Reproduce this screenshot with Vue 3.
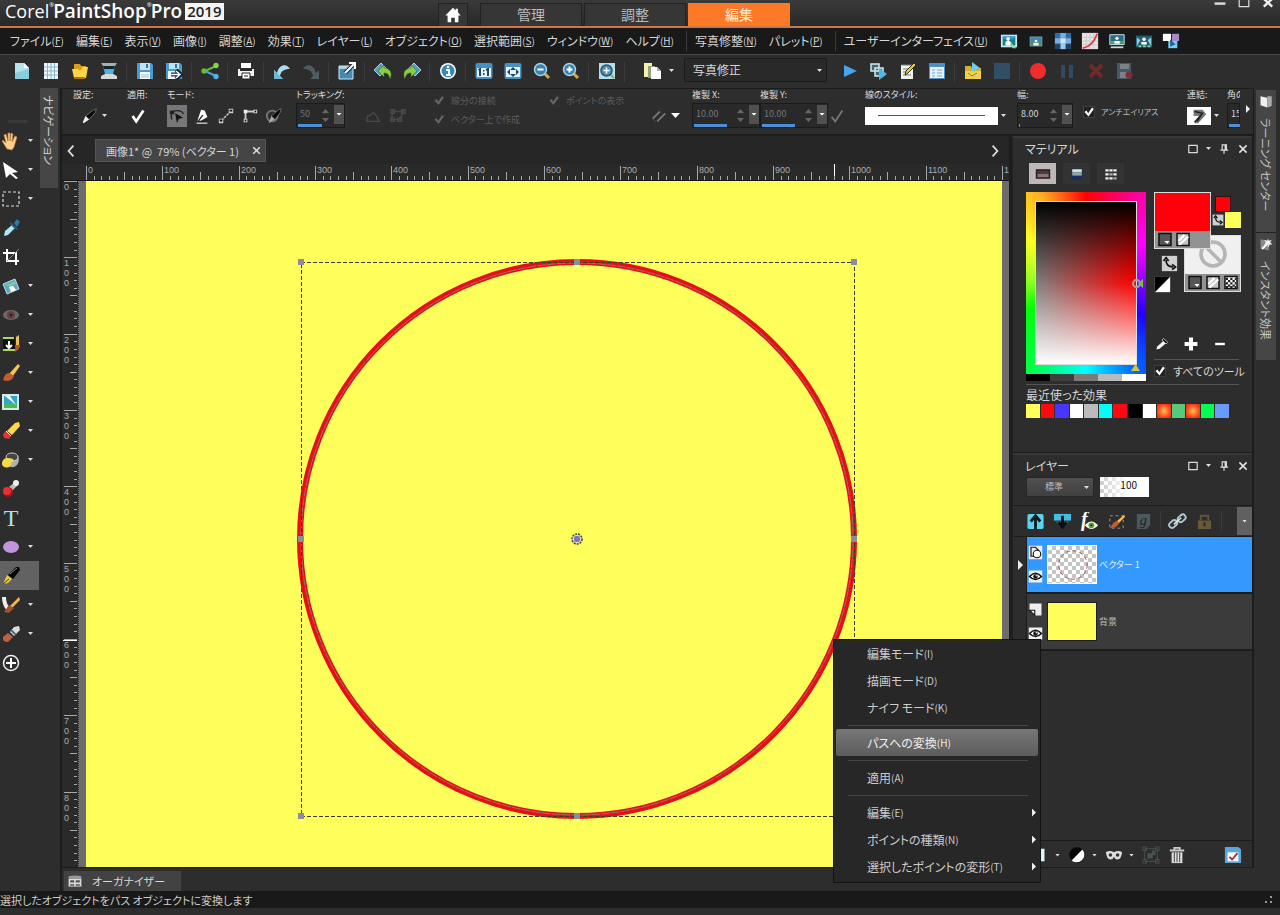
<script setup>
import { ref } from 'vue'

const icons = {
  home: '<path d="M10 2 1.500 10.500H4V18h4v-5h4v5h4v-7.500h2.500L15.500 7V3H13v2z" fill="#fff"/>',
  fresh: '<path d="M3 2h9l5 5v11H3z" fill="#b4e4ee"/><path d="M3 12 17 8v10H3z" fill="#8accdc"/><path d="M12 2v5h5z" fill="#fff"/>',
  grid: '<path d="M3 2h14v16H3z" fill="#eef7fc"/><path d="M6.500 2v16M10 2v16M13.500 2v16M3 6h14M3 10h14M3 14h14" stroke="#8ab4cf"/>',
  open: '<path d="M4 3h6l1 2h5v5H4z" fill="#d99f1d"/><path d="M2 8h6l2 2 3-4h5l-2 11H4z" fill="#ffd548"/><path d="M4 17h11" stroke="#a87512" stroke-width="2"/>',
  scan: '<path d="M2 2h16l-2 3H4z" fill="#aaaead"/><path d="M4 5h12l-2 8H6z" fill="#4ab2e1"/><path d="M4 5h12l-1 3H5z" fill="#14262f"/><path d="M6 13h8l4 2v3H2v-3z" fill="#d5dadb"/>',
  save: '<path d="M2 2h14l2 2v14H2z" fill="#4a9bd0"/><path d="M5 2h10v7H5z" fill="#bfe2f2"/><path d="M11 3h2v4h-2z" fill="#3478a6"/><path d="M5 11h10v7H5z" fill="#f7fbff"/><path d="M6 14h8M6 16h8" stroke="#9cbdcd"/>',
  saveas: '<path d="M2 2h14l2 2v14H2z" fill="#4a9bd0"/><path d="M5 2h10v6H5z" fill="#bfe2f2"/><path d="M11 3h2v4h-2z" fill="#3478a6"/><path d="M4 10h11v8H4z" fill="#f7fbff"/><path d="M7 13.500h8M12 9l5 4.500-5 4.500" fill="none" stroke="#142b3c" stroke-width="4"/><path d="M7 13.500h9M12 10l4 3.500-4 3.500" fill="none" stroke="#fff" stroke-width="1.500"/>',
  share: '<path d="m16 5-11 5" fill="none" stroke="#65ba36" stroke-width="2"/><path d="m5 10 11 5" stroke="#4aa3dd" stroke-width="2"/><circle cx="16" cy="4.500" r="2.700" fill="#86d34c"/><circle cx="4" cy="10" r="2.700" fill="#65ba36"/><circle cx="16" cy="15.500" r="2.700" fill="#53aee6"/>',
  print: '<path d="M5 2h10v5H5z" fill="#fff"/><path d="M2 8h16v7H2z" fill="#f2f2f2"/><path d="M4 8h12v2H4z" fill="#26282a"/><path d="M6 12h8v6H6z" fill="#fff" stroke="#222"/><path d="M8 15h4" stroke="#222"/>',
  undo: '<path d="M2 9v9h9l-3-3c1-5 4-7 10-7-3-6-11-5-13 4z" fill="#a9dcec"/><path d="M2 9v9h9l-3-3-3-3z" fill="#70bad1"/>',
  redo: '<path d="M18 9v9H9l3-3c-1-5-4-7-10-7 3-6 11-5 13 4z" fill="#4d5d63"/>',
  resize: '<path d="M2 5h14v13H2z" fill="#438ab5"/><path d="M2 5h14v3H2z" fill="#a9cfe2"/><path d="M2 5h14v13H2z" fill="none" stroke="#d2e8f4"/><path d="m8 12 8-8" stroke="#1d2d38" stroke-width="4"/><path d="m8 12 9-9m-5-1h6v6" fill="none" stroke="#fff" stroke-width="2"/>',
  rotl: '<path d="m1 9 7-7 6 6-7 7z" fill="#559bc0" stroke="#a5d8ed"/><path d="m5 10 6-6v3c6 0 9 5 6 11-1-4-2-6-6-6v4z" fill="#8ccc42" stroke="#355f16" stroke-width=".5"/>',
  rotr: '<path d="m19 9-7-7-6 6 7 7z" fill="#559bc0" stroke="#a5d8ed"/><path d="M15 10 9 4v3c-6 0-9 5-6 11 1-4 2-6 6-6v4z" fill="#8ccc42" stroke="#355f16" stroke-width=".5"/>',
  info: '<circle cx="10" cy="10" r="8" fill="#fff"/><circle cx="10" cy="10" r="6.500" fill="#3687ba"/><circle cx="10" cy="6" r="1.300" fill="#fff"/><path d="M8 9h3v5m-3 0h5" fill="none" stroke="#fff" stroke-width="2"/>',
  one: '<rect x="1.500" y="2" width="17" height="16" rx="2" fill="#4790c5"/><path d="M3 7h14v9H3z" fill="#e5f3fc"/><path d="M4.500 9 6 8v7m6-6 2-1v7" fill="none" stroke="#1d466b" stroke-width="2"/><path d="M9 9h1.500v1.500H9zm0 3h1.500v2H9z" fill="#1d466b"/>',
  fit: '<rect x="1.500" y="2" width="17" height="16" rx="2" fill="#4790c5"/><path d="M3 6h14v10H3z" fill="#e5f3fc"/><path d="m4 11 3-3v6zm12 0-3-3v6zM10 6l3 3H7zm0 10 3-3H7z" fill="#1d466b"/>',
  zoomout: '<path d="m12 12 5 5" stroke="#d7a740" stroke-width="3"/><circle cx="8.500" cy="8.500" r="6" fill="#3b81aa" stroke="#a6d5e8" stroke-width="1.500"/><path d="M5.500 8.500h6" stroke="#fff" stroke-width="2"/>',
  zoomin: '<path d="m12 12 5 5" stroke="#d7a740" stroke-width="3"/><circle cx="8.500" cy="8.500" r="6" fill="#3b81aa" stroke="#a6d5e8" stroke-width="1.500"/><path d="M5.500 8.500h6m-3-3v6" stroke="#fff" stroke-width="2"/>',
  zoomfit: '<path d="M2 2h16v16H2z" fill="#b7dde6"/><path d="m12 12 5 5" stroke="#b89b45" stroke-width="2"/><circle cx="9.500" cy="9.500" r="5.500" fill="#4e94b2" stroke="#245a77" stroke-width="1.500"/><path d="M6.500 9.500h6m-3-3v6" stroke="#fff" stroke-width="1.500"/>',
  copy: '<path d="M2 2h8v14H2z" fill="#f5f0ac"/><path d="M6 5h7v12H6z" fill="#99a17e"/><path d="M9 6h6l4 4v8H9z" fill="#fff"/><path d="M15 6v4h4z" fill="#a5b1b5"/>',
  play: '<path d="m4 4 13 6-13 6z" fill="#43a6ef"/>',
  script: '<path d="M2 3h8v7H2zM6 7h8v8H6z" fill="#356d78" stroke="#d9e7e8" stroke-width="1.500"/><path d="m10 7 8 6-8 6z" fill="#4eb8e0"/>',
  edit: '<path d="M3 4h12v14H3z" fill="#f0f3f0"/><path d="M3 4h12M5 8h7M5 11h5M5 14h8" stroke="#708078"/><path d="m7 14 1-4 8-8 2 2-8 8z" fill="#e7cd33" stroke="#332f19"/>',
  list: '<path d="M2 2h16v16H2z" fill="#4d91c0"/><path d="M3 6h14v11H3z" fill="#e4f1fc"/><path d="M5 9h3m2 0h5M5 12h3m2 0h5M5 15h3m2 0h5" stroke="#7fa5bf"/>',
  batch: '<path d="M2 5h6l1 2h9v11H2z" fill="#d5b129"/><path d="M2 10h16v8H2z" fill="#f2d04c"/><path d="m9 1 8 6-8 4z" fill="#6ccde9"/><path d="m5 12 4 3 5-3" fill="none" stroke="#9a8120"/>',
  stop: '<path d="M2 2h16v16H2z" fill="#314e63"/>',
  rec: '<circle cx="10" cy="10" r="8" fill="#f02b2b"/>',
  pause: '<path d="M4 4h4v13H4zm8 0h4v13h-4z" fill="#324b5f"/>',
  cancel: '<path d="m4 4 12 12M16 4 4 16" stroke="#702a29" stroke-width="4"/>',
  saverec: '<path d="M2 2h14v16H2z" fill="#455967"/><path d="M5 3h9v5H5zm0 8h9v6H5z" fill="#7c8185"/><circle cx="14" cy="14" r="3.500" fill="#812d34"/>',
  photo: '<path d="M1 3h18v14H1z" fill="#c3e9ee"/><path d="M3 5h14v10H3z" fill="#18807e"/><path d="M3 5h14l-2 3H3z" fill="#3c91e0"/><circle cx="9" cy="7.500" r="2" fill="#fff"/><path d="M6 15v-4l3-2 3 2v4z" fill="#fff"/><path d="m12 11 6 7h-4z" fill="#80e2b4"/>',
  photo2: '<path d="M3 5h14v11H3z" fill="#8297a7"/><path d="M4 6h12v4H4z" fill="#3d86bb"/><path d="M4 10h12v5H4z" fill="#48886d"/><circle cx="10" cy="10" r="1.500" fill="#fff"/><path d="M7 15v-3h6v3z" fill="#eee"/>',
  mosaic: '<path d="M1 1h18v18H1z" fill="#316ba3"/><path d="M7 1h6v6H7zM1 7h6v6H1zm12 0h6v6h-6z" fill="#75aee4"/><path d="M7 7h6v6H7z" fill="#cfe8ff"/><path d="M7 13h6v6H7z" fill="#9ccaf3"/><path d="M1 13h6v6H1zm12 0h6v6h-6z" fill="#234565"/>',
  curve: '<path d="M1 1h18v18H1z" fill="#e6e3e3"/><path d="M1 6h18M1 10h18M1 14h18M6 1v18m4-18v18m4-18v18" stroke="#c8c8c8"/><path d="M2 18q11-2 16-16" fill="none" stroke="#e33643" stroke-width="2"/>',
  photo3: '<path d="M2 3h16v11H2z" fill="#2e6b87" stroke="#d5edf4"/><path d="M3 10h14v3H3z" fill="#4aaa6c"/><circle cx="10" cy="7" r="1.800" fill="#fff"/><path d="M7 13v-3h6v3z" fill="#fff"/><path d="M3 16h14v2H3z" fill="#cbd7dd"/>',
  photo4: '<path d="M1 4h18v13H1z" fill="#235e73"/><path d="m2 6 4 3-4 7zm16 0-4 3 4 7z" fill="#83d3e5"/><circle cx="10" cy="8" r="2" fill="#fff"/><path d="M7 14v-3h6v3z" fill="#fff"/><path d="M4 16h3m2 0h3m2 0h3" stroke="#8fd2a1" stroke-width="2"/>',
  layers: '<path d="M1 2h9v8H1z" fill="#fff"/><path d="M11 2h8v8h-8z" fill="#a788cb"/><path d="M7 10h10v8H7z" fill="#70d2ee"/><path d="m9 8 6 6-6 2z" fill="#285c9c"/>',
  hand: '<path d="M6 18 1 10c1-1 2 0 4 2L3 4l2-1 2 7V2h2v8l1-8 2 1-1 8 3-6 2 1-3 10-2 3z" fill="#ffd18c" stroke="#b57a39" stroke-width=".7"/>',
  arrow: '<path d="M2 2 17 12l-6 1 6 5-2 1-6-5-4 4z" fill="#fff"/>',
  marquee: '<path d="M2 3h16v14H2z" fill="none" stroke="#ddd" stroke-dasharray="3 2" stroke-width="1.200"/>',
  dropper: '<path d="m3 18 1-5 7-6 3 3-7 7z" fill="#ade7f3"/><path d="m10 4 7 7-2 1-6-6z" fill="#1d5d87"/><path d="m13 5 3-4 3 3-3 5z" fill="#2f78a8"/>',
  crop: '<path d="M2 6h13v12M6 2v12h12" fill="none" stroke="#fff" stroke-width="2"/><path d="m6 14 12-12" stroke="#888"/>',
  straighten: '<path d="m2 8 12-5 4 10-12 5z" fill="#5ca9c5" stroke="#bcdae1"/><path d="m4 9 10-4 1 3-6 3z" fill="#7bc6a7"/><path d="m8 11 4-1 3 4-5 2z" fill="#fff"/>',
  redeye: '<ellipse cx="10" cy="10" rx="8" ry="5" fill="#71676a"/><circle cx="10" cy="10" r="4" fill="#684044"/><circle cx="10" cy="10" r="1.500" fill="#292325"/>',
  clone: '<path d="M2 3h12v14H2z" fill="#111"/><path d="M2 4h11M2 16h13" stroke="#a8dc55" stroke-width="2"/><path d="M8 7v6m-3-2 3 3 3-3" fill="none" stroke="#fff" stroke-width="2"/><path d="M18 1v10h-3V3z" fill="#f2bd5d"/><path d="M14 11h5q0 5-6 7 2-3 1-7z" fill="#b8572c"/>',
  brush: '<path d="m17 1 2 2-7 10-4-2z" fill="#f4c458"/><path d="M9 10q-5-1-7 7 8 3 11-4z" fill="#c55c2f"/>',
  picture: '<path d="M1 2h17v16H1z" fill="#d6e9e8"/><path d="M3 4h13v12H3z" fill="#31a4ce"/><path d="M3 12q7-2 13 0v4H3z" fill="#48b95a"/><path d="M4 4h5l6 9z" fill="#fff"/>',
  eraser: '<path d="m14 2 4-1 1 4-8 9-5-4z" fill="#ffd948"/><path d="m5 10 5 5-2 3-5-1-1-4z" fill="#e6333c"/><path d="m5 10 5 5" stroke="#fff"/>',
  bucket: '<path d="M5 5h12q2 6-1 10-4 4-8 1z" fill="#b0b0b0"/><ellipse cx="11" cy="7" rx="6" ry="4" fill="#444" stroke="#ccc"/><path d="M1 14c0-6 5-7 11-5 2 3-2 2-2 6-2 4-9 3-9-1z" fill="#f4d94a"/>',
  stamp: '<path d="m8 8 6-5 3 3-6 6z" fill="#bbb"/><circle cx="15" cy="4" r="3" fill="#eee"/><circle cx="7" cy="13" r="5" fill="#a8131c"/><circle cx="6" cy="12" r="4" fill="#ee2c34"/>',
  text: '<text x="10" y="18" text-anchor="middle" font-family="Liberation Serif" font-size="24" fill="#a4e4f1">T</text>',
  ellipse: '<ellipse cx="10" cy="10" rx="8" ry="6" fill="#c393db"/>',
  pen: '<path d="m18 1 1 3-7 9-5-4 8-8z" fill="#060606"/><path d="m9 8 7-6" stroke="#888"/><path d="m6 9 5 4-4 4-5 1z" fill="#e9ca47"/><path d="m2 18 6-5" stroke="#493b14"/>',
  warp: '<path d="M3 2q0 7 4 12" fill="none" stroke="#eee" stroke-width="4"/><path d="m18 2 1 3-8 8-2-2z" fill="#f8b943"/><path d="m8 10 5 3-5 5-5-1z" fill="#a84f2d"/>',
  mixer: '<path d="m13 3 5-1 1 4-6 6-4-4z" fill="#ddd"/><path d="m7 9 5 4-5 5q-6 0-5-5z" fill="#c06043"/><path d="m10 6 5 5" stroke="#526a78" stroke-width="2"/>',
  plus: '<circle cx="10" cy="10" r="7.500" fill="none" stroke="#eee" stroke-width="1.500"/><path d="M10 5v10M5 10h10" stroke="#fff" stroke-width="2"/>',
  nib: '<path d="m17 2-1 4-7 8-4-4 8-6z" fill="#0b0b0b" stroke="#bbb" stroke-width=".5"/><path d="m5 10 4 4-6 4-1-1z" fill="#eee"/>',
  check: '<path d="m4 10 4 6L16 4" fill="none" stroke="#fff" stroke-width="3"/>',
  modeedit: '<path d="M4 14q-2-10 6-10 6 0 7 4" fill="none" stroke="#222" stroke-width="1.500"/><path d="M2 4h5v4H2z" fill="#222"/><path d="m8 7 9 5-5 1-2 5z" fill="#111"/>',
  modepen: '<path d="m9 3 4 1 3 7-12 7 3-9z" fill="#fff"/><path d="m4 18 7-9m5 7H4" stroke="#222" stroke-width="1.500"/><path d="M4 18h12" stroke="#ccc" stroke-width="1.500"/>',
  modeline: '<path d="m5 15 10-10" stroke="#ccc" stroke-width="1.500" stroke-dasharray="3 1"/><path d="M2 13h5v5H2zM13 2h5v5h-5z" fill="#ccc"/><path d="M3 15h3m8-11h3" stroke="#111" stroke-width="2"/>',
  modecurve: '<path d="M5 14V5h10" fill="none" stroke="#ccc" stroke-width="2"/><path d="M3 13h4v4H3zM3 3h4v4H3zm11 0h4v4h-4z" fill="#eee"/><path d="M4 15h2m9-10h2" stroke="#111" stroke-width="2"/>',
  modeknife: '<circle cx="8" cy="10" r="6" fill="none" stroke="#777" stroke-width="2"/><path d="m18 2-1 4-6 8-4-4 8-7z" fill="#0b0b0b" stroke="#bbb" stroke-width=".5"/><path d="m7 10 4 4-7 4z" fill="#aaa"/>',
  shape: '<path d="M3 16h14l-3-6-4-4-4 4H4z" fill="none" stroke="#494949" stroke-width="1.500"/>',
  nodes: '<path d="M4 5h12l-4 9H3zM2 3h4v4H2zm12 0h4v4h-4zM2 12h4v4H2zm8 0h4v4h-4z" fill="none" stroke="#494949" stroke-width="1.500"/>',
  lines: '<path d="m3 13 8-8M8 16 17 7" stroke="#777" stroke-width="2"/><path d="m3 13 4 4" stroke="#555"/>',
  join: '<path d="M4 3h10l4 5-9 10H5l5-8H4z" fill="#777"/><path d="m5 5 9 2-6 9m-3 1 8-9" fill="none" stroke="#222" stroke-width="1.500"/>',
  frameTab: '<path d="M1 4h18v12H1z" fill="#2a2325"/><path d="M3 6h14v4H3z" fill="#4d3a3c"/><path d="M3 10h14v4H3z" fill="#8d7474"/>',
  gradTab: '<path d="M3 3h14v14H3z" fill="#1a2d5c"/><path d="M4 4h12v4H4z" fill="#d9e2cf"/><path d="M4 8h12v4H4z" fill="#8ea7a8"/>',
  dotTab: '<path d="M3 4h4v3H3zm5 0h4v3H8zm5 0h4v3h-4zM3 9h4v3H3zm10 0h4v3h-4zM3 14h4v3H3zm5 0h4v3H8z" fill="#eee"/><path d="M8 9h4v3H8zm5 5h4v3h-4z" fill="#aaa"/>',
  square: '<path d="M3 4h14v12H3z" fill="none" stroke="#ddd" stroke-width="2"/>',
  pin: '<path d="M7 3h7v9H7zm-3 9h13M10 12v6" fill="none" stroke="#ddd" stroke-width="2"/><path d="M11 3h3v9h-3z" fill="#ddd"/>',
  close: '<path d="m4 4 12 12M16 4 4 16" stroke="#e5e5e5" stroke-width="2.500"/>',
  whiteDrop: '<path d="m3 17 1-4 8-7 3 3-8 7z" fill="#f5f5f5"/><path d="m12 3 5 5-2 2-5-5z" fill="#111" stroke="#ddd"/>',
  bigPlus: '<path d="M10 2v16M2 10h16" stroke="#fff" stroke-width="5"/>',
  minus: '<path d="M4 10h12" stroke="#fff" stroke-width="3"/>',
  up: '<rect x="1.500" y="2" width="17" height="16" rx="2" fill="#59d3f0"/><path d="M10 18V5m-5 5 5-6 5 6" fill="none" stroke="#121b20" stroke-width="3"/>',
  down: '<path d="M1 2h18v7H1z" fill="#42bee4"/><path d="M3 10h14l-7 8z" fill="#565f63"/><path d="M10 4v12m-4-5 4 5 4-5" fill="none" stroke="#0a0f12" stroke-width="3"/>',
  fx: '<text x="1" y="15" font-family="Liberation Serif" font-size="21" font-weight="700" font-style="italic" fill="#fff">f</text><path d="M5 14q7-8 14 0-7 8-14 0" fill="#f3fff0"/><circle cx="12" cy="14" r="3" fill="#5a9d35"/><circle cx="12" cy="14" r="1" fill="#142a0c"/>',
  layerBrush: '<path d="M3 4h14v13H3z" fill="none" stroke="#999" stroke-dasharray="3 3"/><path d="m18 3 1 2-7 7-2-2z" fill="#f4bf54"/><path d="m7 11 4-2 2 3-4 4-6 1z" fill="#c45c31"/>',
  layerLink: '<path d="M3 2h14v12l-4 4H3z" fill="#49595f"/><text x="6" y="14" font-family="Liberation Serif" font-size="15" font-style="italic" fill="#222">g</text>',
  link: '<g fill="none" stroke="#afc8d2" stroke-width="2"><rect x="1" y="10" width="9" height="6" rx="3" transform="rotate(-42 5 13)"/><rect x="10" y="4" width="9" height="6" rx="3" transform="rotate(-42 14 7)"/></g><path d="m6 13 8-7" stroke="#dae8ee" stroke-width="1.500"/>',
  lock: '<path d="M6 9V4h8v5" fill="none" stroke="#61563c" stroke-width="2"/><path d="M3 9h14v9H3z" fill="#67583a"/><path d="M10 11v4" stroke="#292315" stroke-width="2"/>',
  vector: '<path d="M1 1h18v18H1z" fill="#eee"/><path d="M4 3h6l4 4v8H4z" fill="#eee" stroke="#111" stroke-width="1.500"/><circle cx="12" cy="12" r="5" fill="#fff" stroke="#111" stroke-width="1.500"/>',
  eye: '<path d="M1 2h18v16H1z" fill="#eee"/><path d="M2 10q8-9 16 0-8 8-16 0z" fill="#fff" stroke="#111" stroke-width="2"/><circle cx="10" cy="10" r="3" fill="#111"/><circle cx="11" cy="9" r="1" fill="#fff"/>',
  page: '<path d="M2 2h16v16H9l-7-7z" fill="#eee"/><path d="M2 11h7v7z" fill="#fff" stroke="#111" stroke-width="1.500"/>',
  half: '<circle cx="10" cy="10" r="8.500" fill="#050505"/><path d="M16 4A8.500 8.500 0 0 1 4 16z" fill="#fff"/>',
  mask: '<path d="M1 7q4-3 9 0 5-3 9 0-1 8-5 8-3 0-4-3-1 3-4 3-4 0-5-8z" fill="#ddd"/><circle cx="6" cy="10" r="2" fill="#333"/><circle cx="14" cy="10" r="2" fill="#333"/>',
  group: '<path d="M3 3h14v14H3zM1 1h4v4H1zm14 0h4v4h-4zM1 15h4v4H1zm14 0h4v4h-4z" fill="none" stroke="#465351"/><path d="M6 8h6v6H6zm5-3h4v5h-4z" fill="#465351"/>',
  trash: '<path d="M2 5h16M7 5V2h6v3" fill="none" stroke="#ccc" stroke-width="2"/><path d="M4 7h12v12H4z" fill="#ddd"/><path d="M7 7v11m3-11v11m3-11v11" stroke="#333"/>',
  panel: '<path d="M1 1h15l3 3v15H1z" fill="#5aa7d8"/><path d="M4 7h12v10H4z" fill="#f6fbff"/><path d="m6 12 3 3 6-7" fill="none" stroke="#b4282c" stroke-width="2"/>',
  newLayer: '<path d="M2 3h13v14H2z" fill="#ddf5f9"/>',
  organizer: '<path d="M2 4q8-2 16 0v3H2z" fill="#999"/><path d="M2 7h16v10H2z" fill="#d8d8d8"/><path d="M4 9h5v3H4zm7 0h5v3h-5zM4 14h5v2H4zm7 0h5v2h-5z" fill="#555"/>',
  book: '<path d="m2 3 9 2v13l-9-3z" fill="#eee"/><path d="M11 3h6v13l-6 2z" fill="#aaa"/>',
  instant: '<path d="m2 3 11 2v13L2 15z" fill="#8a8a8a"/><path d="m4 16 10-10" stroke="#fff" stroke-width="2.500"/><path d="m12 2 1 3 4-1-2 3 3 3-4 0-1 4-2-4-4 1 2-4-2-3 4 1z" fill="#eee"/>',
  solid: '<path d="M2 2h16v16H2z" fill="#555" stroke="#111" stroke-width="2"/><path d="M9 12h7l-3 4z" fill="#fff"/>',
  texture: '<path d="M2 2h16v16H2z" fill="#c4c4c4" stroke="#111" stroke-width="2"/><path d="M4 12 12 4M5 17 17 6" stroke="#fff" stroke-width="3"/>',
  checker: '<path d="M2 2h16v16H2z" fill="#fff" stroke="#111" stroke-width="2"/><path d="M3 5h14M3 11h14M3 16h14" stroke="#222" stroke-width="3" stroke-dasharray="3 3"/><path d="M6 8h12M6 14h12" stroke="#222" stroke-width="3" stroke-dasharray="3 3"/>',
  swap: '<path d="M1 1h18v18H1z" fill="#cfcfcf"/><path d="M6 6q0 8 8 8M3 7l3-4 3 4m4 4 4 3-4 3" fill="none" stroke="#111" stroke-width="2"/>',
  blackwhite: '<path d="M1 1h18v18H1z" fill="#fff"/><path d="M1 1h18L1 19z" fill="#000"/>',
}

const menus = [
  ['ファイル', 'F'], ['編集', 'E'], ['表示', 'V'], ['画像', 'I'], ['調整', 'A'], ['効果', 'T'],
  ['レイヤー', 'L'], ['オブジェクト', 'O'], ['選択範囲', 'S'], ['ウィンドウ', 'W'], ['ヘルプ', 'H'],
  null, ['写真修整', 'N'], ['パレット', 'P'], null, ['ユーザーインターフェイス', 'U'],
]
const menuIcons = ['photo', 'photo2', 'mosaic', 'curve', 'photo3', 'photo4', 'layers']
const barLeft = ['fresh', 'grid', 'open', 'scan', '', 'save', 'saveas', '', 'share', '', 'print', '', 'undo', 'redo', '', 'resize', '', 'rotl', 'rotr', '', 'info', '', 'one', 'fit', 'zoomout', 'zoomin', '', 'zoomfit', '']
const barRight = ['play', 'script', 'edit', 'list', '', 'batch', 'stop', '', 'rec', 'pause', 'cancel', 'saverec']
const tools = [
  ['hand', 1], ['arrow', 1], ['marquee', 1], ['dropper', 0], ['crop', 0], ['straighten', 1], ['redeye', 1],
  ['clone', 1], ['brush', 1], ['picture', 1], ['eraser', 1], ['bucket', 1], ['stamp', 0], ['text', 0],
  ['ellipse', 1], ['pen', 0], ['warp', 1], ['mixer', 1], ['plus', 0],
]
const activeTool = ref('pen')
const modes = ['modeedit', 'modepen', 'modeline', 'modecurve', 'modeknife']

const ticks = Array.from({ length: 125 }, (_, i) => ({
  value: i * 10,
  pos: Math.round(i * 7.633),
  kind: i % 10 === 0 ? 'major' : i % 5 === 0 ? 'mid' : 'minor',
}))
const majors = ticks.filter((t) => t.kind === 'major')
const tickStart = { major: 2, mid: 8, minor: 12 }

const handles = [[215, 81], [491, 81], [768, 81], [215, 358], [768, 358], [215, 635], [491, 635], [768, 635]]
const recent = ['yellow', 'red', 'blue', 'white', 'silver', 'cyan', 'red', 'black', 'white', 'burst', 'green', 'burst', 'lime', 'sky']
const contextMenu = [
  ['編集モード', 'I'], ['描画モード', 'D'], ['ナイフ モード', 'K'], null,
  ['パスへの変換', 'H', 'active'], null, ['適用', 'A'], null,
  ['編集', 'E', 'sub'], ['ポイントの種類', 'N', 'sub'], ['選択したポイントの変形', 'T', 'sub'],
]
</script>

<template>
  <div class="app">
    <header class="title">
      <h1><span>Corel</span><sup>®</sup><b>PaintShop</b><sup>®</sup><b>Pro</b><em>2019</em></h1>
      <nav class="workspaces">
        <button class="home" aria-label="ホーム"><svg viewBox="0 0 20 20" v-html="icons.home" /></button>
        <button>管理</button>
        <button>調整</button>
        <button class="current">編集</button>
      </nav>
      <div class="window-buttons">
        <button aria-label="最小化"><svg viewBox="0 0 20 20"><path d="M1 6h18" stroke="#ddd" stroke-width="4" /></svg></button>
        <button aria-label="最大化"><svg viewBox="0 0 20 20"><path d="M2-4h16v15H2z" fill="none" stroke="#ddd" stroke-width="2" /></svg></button>
        <button aria-label="閉じる"><svg viewBox="0 0 20 20"><path d="m3-2 14 13M17-2 3 11" stroke="#eee" stroke-width="4" /></svg></button>
      </div>
    </header>

    <nav class="menubar">
      <template v-for="(m, i) in menus" :key="i">
        <i v-if="!m" class="sep" />
        <button v-else>{{ m[0] }}<small>(<u>{{ m[1] }}</u>)</small></button>
      </template>
      <div class="micons">
        <button v-for="n in menuIcons" :key="n" :aria-label="n"><svg viewBox="0 0 20 20" v-html="icons[n]" /></button>
      </div>
    </nav>

    <div class="toolbar">
      <template v-for="(n, i) in barLeft" :key="i">
        <i v-if="!n" class="sep" />
        <button v-else :aria-label="n"><svg viewBox="0 0 20 20" v-html="icons[n]" /></button>
      </template>
      <button class="paste" aria-label="copy"><svg viewBox="0 0 20 20" v-html="icons.copy" /><i class="caret" /></button>
      <label class="preset">
        <select aria-label="スクリプト"><option>写真修正</option></select><i class="caret" />
      </label>
      <template v-for="(n, i) in barRight" :key="'r' + i">
        <i v-if="!n" class="sep" />
        <button v-else :aria-label="n"><svg viewBox="0 0 20 20" v-html="icons[n]" /></button>
      </template>
    </div>

    <div class="workspace">
      <aside class="tools">
        <i class="grip" />
        <button v-for="t in tools" :key="t[0]" :class="{ on: activeTool === t[0] }" :aria-label="t[0]" @click="activeTool = t[0]">
          <svg viewBox="0 0 20 20" v-html="icons[t[0]]" /><i v-if="t[1]" class="caret" />
        </button>
      </aside>
      <aside class="nav-strip"><button>ナビゲーション</button></aside>

      <div class="center">
        <section class="options">
          <div class="opt o-preset"><span>設定:</span><div><button aria-label="設定"><svg viewBox="0 0 20 20" v-html="icons.nib" /></button><i class="caret" /></div></div>
          <div class="opt o-apply"><span>適用:</span><div><button aria-label="適用"><svg viewBox="0 0 20 20" v-html="icons.check" /></button></div></div>
          <div class="opt o-mode"><span>モード:</span><div><button v-for="(m, i) in modes" :key="m" :class="{ on: i === 0 }" :aria-label="m"><svg viewBox="0 0 20 20" v-html="icons[m]" /></button></div></div>
          <div class="opt o-track"><label for="track">トラッキング:</label><div class="num off"><input id="track" value="50"><i class="spin" /><i class="drop" /><i class="meter half" /></div></div>
          <div class="opt o-shapes"><div><button aria-label="図形"><svg viewBox="0 0 20 20" v-html="icons.shape" /></button><button aria-label="ノード"><svg viewBox="0 0 20 20" v-html="icons.nodes" /></button></div></div>
          <div class="o-checks">
            <label><input type="checkbox" checked disabled>線分の接続</label>
            <label><input type="checkbox" checked disabled>ポイントの表示</label>
            <label><input type="checkbox" checked disabled>ベクター上で作成</label>
          </div>
          <div class="opt o-lines"><div><svg viewBox="0 0 20 20" v-html="icons.lines" /><i class="caret big" /></div></div>
          <div class="opt o-dup"><label for="dupx">複製 X:</label><div class="num off"><input id="dupx" value="10.00"><i class="spin" /><i class="drop" /><i class="meter half" /></div></div>
          <div class="opt o-dup"><label for="dupy">複製 Y:</label><div class="num off"><input id="dupy" value="10.00"><i class="spin" /><i class="drop" /><i class="meter half" /></div></div>
          <div class="opt o-ok"><div><svg viewBox="0 0 20 20"><path d="m4 11 4 5 8-12" fill="none" stroke="#777" stroke-width="2" /></svg></div></div>
          <div class="opt o-style"><span>線のスタイル:</span><div><button class="line" aria-label="線のスタイル"><i /></button><i class="caret" /></div></div>
          <div class="opt o-width"><label for="width">幅:</label><div class="num"><input id="width" value="8.00"><i class="spin" /><i class="drop" /><i class="meter tiny" /></div></div>
          <div class="opt o-aa"><div><label><input type="checkbox" checked>アンチエイリアス</label></div></div>
          <div class="opt o-join"><span>連結:</span><div><button aria-label="連結"><svg viewBox="0 0 20 20" v-html="icons.join" /></button><i class="caret" /></div></div>
          <div class="opt o-miter"><label for="miter">角の制限:</label><div class="num"><input id="miter" value="15"><i class="meter full" /></div></div>
          <button class="more" aria-label="続き"><i class="tri" /></button>
        </section>

        <div class="middle">
          <main class="document">
            <div class="tabs">
              <button class="chev" aria-label="前へ"><svg viewBox="0 0 20 20"><path d="m14 1-8 9 8 9" fill="none" stroke="#ddd" stroke-width="3" /></svg></button>
              <div class="tab"><span>画像1* @&nbsp; 79% (ベクター 1)</span><button aria-label="閉じる"><svg viewBox="0 0 20 20" v-html="icons.close" /></button></div>
              <button class="chev next" aria-label="次へ"><svg viewBox="0 0 20 20"><path d="m6 1 8 9-8 9" fill="none" stroke="#ddd" stroke-width="3" /></svg></button>
            </div>
            <div class="ruler-x">
              <svg shape-rendering="crispEdges">
                <g stroke="#a8a8a8">
                  <line v-for="t in ticks" :key="t.value" :x1="t.pos + 24" :x2="t.pos + 24" :y1="tickStart[t.kind]" y2="16" />
                  <line x1="772" x2="772" y1="0" y2="12" stroke="#fff" />
                </g>
                <text v-for="t in majors" :key="t.value" :x="t.pos + 26" y="9">{{ t.value }}</text>
              </svg>
            </div>
            <div class="view">
              <div class="ruler-y">
                <svg shape-rendering="crispEdges">
                  <g stroke="#a8a8a8">
                    <line v-for="t in ticks" :key="t.value" :y1="t.pos" :y2="t.pos" :x1="tickStart[t.kind]" x2="15" />
                    <line x1="1" x2="15" y1="459" y2="459" stroke="#fff" />
                  </g>
                  <template v-for="t in majors" :key="t.value">
                    <text v-for="(d, k) in String(t.value)" :key="k" x="2" :y="t.pos + 9 + k * 10">{{ d }}</text>
                  </template>
                </svg>
              </div>
              <div class="stage">
                <svg viewBox="0 0 916 687" preserveAspectRatio="xMinYMin slice">
                  <path fill="#ffff5b" d="M0 0h916v687H0z" />
                  <circle cx="491" cy="358" r="277" fill="none" stroke="#e60f14" stroke-width="6" />
                  <circle cx="491" cy="358" r="276" fill="none" stroke="#9c7074" stroke-width="1" stroke-dasharray="9 1" />
                  <path d="M215 81h553v554H215z" fill="none" stroke="#3c3c28" stroke-dasharray="4 2" shape-rendering="crispEdges" />
                  <rect v-for="(h, i) in handles" :key="i" :x="h[0] - 3" :y="h[1] - 3" width="6" height="6" fill="#8c8ca0" />
                  <circle cx="491" cy="358" r="5" fill="#e4e4b0" stroke="#42424f" stroke-width="1.500" stroke-dasharray="2 1" />
                  <rect x="488" y="355" width="6" height="6" rx="2" fill="#7777c6" />
                </svg>
              </div>
            </div>
          </main>

          <aside class="panels">
            <section class="panel materials">
              <header><h2>マテリアル</h2><button aria-label="最大化"><svg viewBox="0 0 20 20" v-html="icons.square" /></button><i class="caret" /><button aria-label="固定"><svg viewBox="0 0 20 20" v-html="icons.pin" /></button><button aria-label="閉じる"><svg viewBox="0 0 20 20" v-html="icons.close" /></button></header>
              <div class="mtabs">
                <button class="on" aria-label="フレーム"><svg viewBox="0 0 20 20" v-html="icons.frameTab" /></button>
                <button aria-label="レインボー"><svg viewBox="0 0 20 20" v-html="icons.gradTab" /></button>
                <button aria-label="スウォッチ"><svg viewBox="0 0 20 20" v-html="icons.dotTab" /></button>
              </div>
              <div class="picker">
                <div class="hue-col">
                  <div class="hue"><div class="sl" /><i class="hue-mark" /><i class="ring" /><i class="side-mark" /></div>
                  <div class="grays"><i /><i /><i /><i /><i /></div>
                </div>
                <div class="mix">
                  <div class="swatches">
                    <div class="back"><div class="none"><svg viewBox="0 0 30 30"><circle cx="15" cy="15" r="10" fill="none" stroke="#b5b5b5" stroke-width="3" /><path d="m8 8 14 14" stroke="#b5b5b5" stroke-width="3" /></svg></div><div class="kinds"><svg viewBox="0 0 20 20" v-html="icons.solid" /><svg viewBox="0 0 20 20" v-html="icons.texture" /><svg viewBox="0 0 20 20" v-html="icons.checker" /></div></div>
                    <div class="fore"><div class="fill" /><div class="kinds"><svg viewBox="0 0 20 20" v-html="icons.solid" /><svg viewBox="0 0 20 20" v-html="icons.texture" /></div></div>
                    <i class="mini-yellow" /><i class="mini-red" />
                    <svg class="mini-swap" viewBox="0 0 20 20" v-html="icons.swap" />
                    <svg class="swap" viewBox="0 0 20 20" v-html="icons.swap" />
                    <svg class="bw" viewBox="0 0 20 20" v-html="icons.blackwhite" />
                  </div>
                  <div class="mix-actions">
                    <button aria-label="スポイト"><svg viewBox="0 0 20 20" v-html="icons.whiteDrop" /></button>
                    <button aria-label="追加"><svg viewBox="0 0 20 20" v-html="icons.bigPlus" /></button>
                    <button aria-label="削除"><svg viewBox="0 0 20 20" v-html="icons.minus" /></button>
                  </div>
                  <label class="all"><input type="checkbox" checked>すべてのツール</label>
                </div>
              </div>
              <h3>最近使った効果</h3>
              <div class="recent"><i v-for="(c, i) in recent" :key="i" :class="c" /></div>
            </section>

            <section class="panel layers">
              <header><h2>レイヤー</h2><button aria-label="最大化"><svg viewBox="0 0 20 20" v-html="icons.square" /></button><i class="caret" /><button aria-label="固定"><svg viewBox="0 0 20 20" v-html="icons.pin" /></button><button aria-label="閉じる"><svg viewBox="0 0 20 20" v-html="icons.close" /></button></header>
              <div class="blend">
                <label><select aria-label="ブレンドモード"><option>標準</option></select><i class="caret" /></label>
                <input aria-label="不透明度" value="100">
              </div>
              <div class="layer-tools">
                <button v-for="n in ['up', 'down', 'fx', 'layerBrush', 'layerLink']" :key="n" :aria-label="n"><svg viewBox="0 0 20 20" v-html="icons[n]" /></button>
                <i class="sep" />
                <button v-for="n in ['link', 'lock']" :key="n" :aria-label="n"><svg viewBox="0 0 20 20" v-html="icons[n]" /></button>
                <i class="sep" />
                <button class="expand" aria-label="その他"><i class="caret" /></button>
              </div>
              <ul>
                <li class="selected">
                  <i class="tri" />
                  <div class="flags"><svg viewBox="0 0 20 20" v-html="icons.vector" /><svg viewBox="0 0 20 20" v-html="icons.eye" /></div>
                  <svg class="thumb checks" viewBox="0 0 50 39"><circle cx="26" cy="20" r="15" fill="none" stroke="#ad4858" stroke-dasharray="4 3" /></svg>
                  <span>ベクター 1</span>
                </li>
                <li>
                  <div class="flags"><svg viewBox="0 0 20 20" v-html="icons.page" /><svg viewBox="0 0 20 20" v-html="icons.eye" /></div>
                  <i class="thumb plain" />
                  <span>背景</span>
                </li>
              </ul>
              <footer>
                <button aria-label="新規レイヤー"><svg viewBox="0 0 20 20" v-html="icons.newLayer" /><i class="caret" /></button>
                <button aria-label="調整レイヤー"><svg viewBox="0 0 20 20" v-html="icons.half" /><i class="caret" /></button>
                <button aria-label="マスク"><svg viewBox="0 0 20 20" v-html="icons.mask" /><i class="caret" /></button>
                <button aria-label="グループ"><svg viewBox="0 0 20 20" v-html="icons.group" /></button>
                <button aria-label="削除"><svg viewBox="0 0 20 20" v-html="icons.trash" /></button>
                <button class="last" aria-label="パネル設定"><svg viewBox="0 0 20 20" v-html="icons.panel" /></button>
              </footer>
            </section>
          </aside>
        </div>
        <div class="dock"><button><svg viewBox="0 0 20 20" v-html="icons.organizer" />オーガナイザー</button></div>
      </div>

      <aside class="right-strip">
        <button class="learn"><svg viewBox="0 0 20 20" v-html="icons.book" />ラーニング センター</button>
        <button class="effects"><svg viewBox="0 0 20 20" v-html="icons.instant" />インスタント効果</button>
      </aside>
    </div>

    <div class="status"><span>選択したオブジェクトをパス オブジェクトに変換します</span><svg viewBox="0 0 12 12"><path d="M8 2h2v2H8zM8 7h2v2H8zM3 7h2v2H3z" fill="#999" /></svg></div>

    <div class="context" role="menu">
      <template v-for="(m, i) in contextMenu" :key="i">
        <hr v-if="!m">
        <button v-else role="menuitem" :class="m[2]">{{ m[0] }}<small>({{ m[1] }})</small><i v-if="m[2] === 'sub'" class="tri" /></button>
      </template>
    </div>
  </div>
</template>

<style>
html, body { margin: 0; background: #2d2d2d; }
</style>

<style scoped>
* { box-sizing: border-box; }
.app { position: relative; min-height: 100vh; display: flex; flex-direction: column; overflow: hidden; background: #2d2d2d; color: #d6d6d6; padding-bottom: 7px; font: 12px/16px "Noto Sans CJK JP", "Liberation Sans", sans-serif; font-feature-settings: "palt"; white-space: nowrap; }
button { display: flex; align-items: center; justify-content: center; padding: 0; border: 0; background: none; color: inherit; font: inherit; font-feature-settings: inherit; white-space: nowrap; flex: none; }
input, select { font: inherit; font-feature-settings: inherit; color: inherit; }
svg { display: block; width: 20px; height: 20px; flex: none; }
i { flex: none; font-style: normal; }
.caret { width: 5px; height: 3px; background: #ddd; clip-path: polygon(0 0, 100% 0, 50% 100%); }
.caret.big { width: 9px; height: 5px; background: #fff; }
.tri { width: 4px; height: 8px; background: #eee; clip-path: polygon(0 0, 100% 50%, 0 100%); }
.sep { width: 1px; height: 20px; background: #3b3b3b; }

.title { height: 28px; display: flex; border-bottom: 2px solid #d0744a; background: linear-gradient(#3a3a3a, #282828); }
h1 { width: 438px; margin: 0; padding-left: 5px; display: flex; align-items: center; height: 22px; font: 19px/22px "Open Sans", "Noto Sans", sans-serif; color: #fff; }
h1 span { font-size: 18px; }
h1 b { font-weight: 600; }
h1 sup { align-self: flex-start; font-size: 6px; line-height: 10px; width: 4px; }
h1 em { margin-left: 3px; padding: 0 2px; height: 17px; background: #f4f4f4; color: #222; font: 600 15px/17px "Open Sans", "Noto Sans", sans-serif; }
.workspaces { display: flex; align-items: flex-end; gap: 2px; font-size: 14px; color: #bbb; }
.workspaces button { width: 102px; height: 23px; padding-bottom: 3px; background: #363636; border: 1px solid #222; border-bottom: 0; }
.workspaces .home { width: 30px; margin-right: 10px; padding: 0; }
.workspaces .home svg { width: 18px; height: 18px; }
.workspaces .current { background: #fb7927; border-color: #fb7927; color: #fff0e4; }
.window-buttons { margin-left: auto; display: flex; align-items: flex-start; gap: 12px; padding-right: 6px; }
.window-buttons svg { width: 12px; height: 12px; }

.menubar { height: 27px; display: flex; align-items: center; gap: 12px; padding-left: 10px; background: #191919; border-bottom: 1px solid #484848; }
.menubar small { font-size: 10px; }
.menubar .sep { margin-right: -4px; }
.micons { display: flex; gap: 9px; }
.micons svg { width: 18px; height: 18px; }

.toolbar { height: 33px; display: flex; align-items: center; padding-left: 7px; }
.toolbar > button { width: 29px; height: 30px; padding-bottom: 2px; }
.toolbar > .sep { margin: 0 3px; }
.toolbar > .paste { width: 56px; gap: 7px; padding-left: 4px; }
.preset { position: relative; width: 143px; height: 24px; margin-right: 8px; margin-bottom: 3px; }
.preset select { width: 100%; height: 100%; appearance: none; background: #292929; border: 1px solid #1a1a1a; border-radius: 2px; padding: 0 8px; }
.preset .caret { position: absolute; right: 5px; top: 11px; }

.workspace { flex: 1; display: flex; align-items: stretch; }
.tools { width: 40px; }
.tools .grip { display: block; width: 19px; height: 3px; margin: 32px 0 3px 8px; background: #393939; }
.tools button { width: 39px; height: 29px; justify-content: flex-start; padding-left: 1px; gap: 7px; }
.tools button.on { background: #626262; }
.nav-strip { width: 22px; border-right: 2px solid #1c1c1c; }
.nav-strip button, .right-strip button { writing-mode: vertical-rl; text-orientation: sideways; background: #464646; font-size: 11px; }
.nav-strip button { width: 18px; height: 100px; padding-top: 7px; justify-content: flex-start; line-height: 18px; }
.center { flex: 1; min-width: 0; display: flex; flex-direction: column; }

.options { height: 48px; display: flex; align-items: stretch; overflow: hidden; border-top: 1px solid #1c1c1c; border-bottom: 2px solid #1c1c1c; border-right: 1px solid #1c1c1c; font-size: 9px; line-height: 12px; }
.opt { flex: none; display: flex; flex-direction: column; }
.opt > span, .opt > label { height: 14px; color: #ddd; }
.opt > div { height: 25px; display: flex; align-items: center; margin-top: auto; margin-bottom: 6px; }
.opt svg { width: 18px; height: 18px; }
.opt button { width: 22px; height: 22px; }
.o-preset { width: 65px; padding-left: 11px; }
.o-preset > div { padding-left: 6px; gap: 1px; }
.o-apply { width: 40px; }
.o-mode { width: 129px; }
.o-mode > div { gap: 2px; }
.o-mode button.on { background: #777; width: 20px; margin-right: 2px; }
.num { position: relative; border: 1px solid #1b1b1b; background: #292929; gap: 5px; }
.num input { flex: 1; min-width: 0; width: 0; border: 0; padding: 0 0 3px 3px; background: none; font-size: 9px; outline: 0; }
.num.off input { color: #777; }
.spin { width: 7px; height: 13px; background: #666; clip-path: polygon(0 30%, 50% 0, 100% 30%, 100% 32%, 0 32%, 0 70%, 100% 70%, 50% 100%, 0 70%); }
.drop { width: 10px; height: 19px; margin-bottom: 3px; background: #505050; position: relative; }
.drop::after { content: ""; position: absolute; left: 2px; top: 8px; width: 6px; height: 3px; background: #fff; clip-path: polygon(0 0, 100% 0, 50% 100%); }
.meter { position: absolute; left: 1px; bottom: 0; height: 3px; background: #4a90d9; }
.meter.half { width: 50%; }
.meter.tiny { width: 1px; }
.meter.full { width: 100%; }
.o-track { width: 66px; }
.o-track .num { width: 49px; }
.o-shapes { width: 67px; }
.o-shapes > div { gap: 3px; }
.o-checks { width: 221px; display: grid; grid-template-columns: 115px 1fr; align-content: center; row-gap: 7px; padding: 0 0 3px 4px; color: #5c5c5c; flex: none; }
.o-checks label, .o-aa label { display: flex; align-items: center; gap: 6px; }
input[type=checkbox] { appearance: none; flex: none; width: 12px; height: 12px; margin: 0; background: #222; position: relative; border: 1px solid #3e3e3e; }
input[type=checkbox]::after { content: ""; position: absolute; inset: 0; background: #fff; clip-path: polygon(5% 50%, 25% 35%, 42% 62%, 80% 5%, 98% 20%, 45% 95%); }
input[type=checkbox]:disabled { border-color: #303030; background: none; }
input[type=checkbox]:disabled::after { background: #666; }
.o-lines { width: 42px; }
.o-lines > div { gap: 3px; }
.o-dup { width: 68px; }
.o-dup .num { width: 68px; }
.o-ok { width: 37px; }
.o-style { width: 152px; }
.opt .line { width: 133px; height: 18px; background: #fff; margin-right: 3px; }
.line i { width: 107px; height: 1px; background: #555; }
.o-width { width: 66px; }
.o-width .num { width: 56px; }
.o-aa { width: 104px; color: #bbb; font-size: 8px; }
.o-aa > div { height: 32px; }
.o-join { width: 40px; }
.o-join > div { gap: 3px; }
.o-join button { width: 24px; height: 18px; background: #fff; }
.o-miter { width: 13px; overflow: hidden; }
.o-miter .num { width: 13px; }
.more { margin-left: 6px; height: 40px; }

.middle { flex: 1; display: flex; }
.document { flex: 1; min-width: 0; display: flex; flex-direction: column; border-right: 3px solid #1d1d1d; background: #262626; }
.tabs { height: 28px; display: flex; align-items: center; padding: 1px 8px 0 3px; }
.chev svg { width: 12px; height: 14px; }
.next { margin-left: auto; }
.tab { margin-left: 18px; width: 171px; height: 23px; background: #454545; border: 1px solid #555; display: flex; align-items: center; justify-content: space-between; padding: 0 3px 0 10px; font-size: 11px; }
.tab svg { width: 11px; height: 11px; }
.ruler-x { height: 17px; background: #2a2a2a; border-bottom: 1px solid #161616; }
.ruler-x svg { width: 100%; height: 16px; }
.ruler-x text, .ruler-y text { font: 9px "Liberation Sans", sans-serif; fill: #aaa; }
.view { flex: 1; display: flex; }
.ruler-y { position: relative; width: 17px; background: #2a2a2a; border-right: 1px dotted #777; }
.ruler-y svg { position: absolute; inset: 0; width: 16px; height: 100%; }
.stage { position: relative; flex: 1; background: #6c6c6c; }
.stage svg { position: absolute; left: 7px; top: 0; width: calc(100% - 14px); height: 100%; }

.panels { width: 242px; display: flex; flex-direction: column; border-right: 2px solid #1c1c1c; }
.panel { border-left: 1px solid #222; border-top: 2px solid #383838; }
.panel header { height: 21px; display: flex; align-items: center; padding: 0 3px 0 12px; gap: 7px; }
h2 { margin: 0 auto 0 0; font: inherit; line-height: 20px; }
.panel header svg { width: 12px; height: 12px; }
.materials { height: 317px; border-bottom: 1px solid #1c1c1c; }
.mtabs { display: flex; gap: 7px; padding: 4px 0 0 16px; height: 33px; }
.mtabs button { width: 27px; height: 21px; background: #333; }
.mtabs button.on { background: #bcb8b8; }
.mtabs svg { width: 16px; height: 18px; }
.picker { display: flex; margin: 0 13px; height: 193px; border-bottom: 1px solid #555; }
.hue-col { flex: none; width: 120px; margin-right: 8px; }
.hue { position: relative; height: 182px; padding: 9px; background: conic-gradient(#f00, #f0a 33deg, #f0f 55deg, #80f 90deg, #20f 120deg, #06f 150deg, #0ff 180deg, #0f4 213deg, #0f0 245deg, #8f2 270deg, #ff2 308deg, #ffae20 333deg, #f00); }
.sl { height: 100%; border: 1px solid #ddd; background: linear-gradient(#000, #0000 50%, #fff0 50%, #fff), linear-gradient(90deg, #808080, #f00); }
.ring { position: absolute; right: 5px; top: 87px; width: 9px; height: 9px; border: 2px solid #9a9; border-radius: 50%; }
.side-mark { position: absolute; right: 3px; top: 87px; width: 5px; height: 9px; background: #6ec832; clip-path: polygon(0 50%, 100% 0, 100% 100%); }
.hue-mark { position: absolute; right: 6px; bottom: 3px; width: 9px; height: 7px; background: #dfc32b; clip-path: polygon(50% 0, 100% 100%, 0 100%); }
.grays { display: grid; grid-template-columns: repeat(5, 1fr); height: 7px; }
.grays i:nth-child(1) { background: #000; }
.grays i:nth-child(2) { background: #3e3e3e; }
.grays i:nth-child(3) { background: #7b7b7b; }
.grays i:nth-child(4) { background: #bababa; }
.grays i:nth-child(5) { background: #fff; }
.mix { flex: 1; min-width: 0; }
.swatches { position: relative; height: 137px; }
.swatches > * { position: absolute; }
.fore { left: 0; top: 0; width: 57px; height: 57px; border: 1px solid #ddd; background: #929292; }
.fill { height: 38px; background: #ff000b; }
.back { left: 30px; top: 43px; width: 57px; height: 57px; border: 1px solid #ddd; background: #929292; }
.none { height: 38px; background: #f0f0f0; display: flex; justify-content: center; }
.none svg { width: 36px; height: 36px; }
.kinds { display: flex; gap: 2px; padding: 1px 2px; }
.kinds svg { width: 16px; height: 15px; }
.mini-red { left: 61px; top: 4px; width: 16px; height: 16px; background: #ff000b; border: 1px solid #311; }
.mini-yellow { left: 71px; top: 20px; width: 16px; height: 16px; background: #ffff5b; }
.mini-swap { left: 58px; top: 22px; width: 12px; height: 12px; }
.swap { left: 7px; top: 63px; width: 17px; height: 17px; }
.bw { left: 0; top: 84px; width: 17px; height: 17px; }
.mix-actions { display: flex; gap: 13px; height: 31px; align-items: center; border-bottom: 1px solid #555; }
.mix-actions svg { width: 16px; height: 16px; }
.all { display: flex; align-items: center; height: 22px; gap: 7px; font-size: 11px; }
h3 { margin: 0; padding: 0 13px; font: inherit; line-height: 19px; }
.recent { display: grid; grid-template-columns: repeat(14, 1fr); width: 203px; height: 14px; gap: 1px; margin: 0 0 0 13px; }
.yellow { background: #ffff5b; }
.red { background: #ff0812; }
.blue { background: #4636ff; }
.white { background: #fff; }
.silver { background: #bbb; }
.cyan { background: #00fff7; }
.black { background: #000; }
.burst { background: radial-gradient(#ffc44c, #ff4b20 60%, #ed1c10); }
.green { background: #55ca7b; }
.lime { background: #00ff52; }
.sky { background: #699bfa; }

.layers { flex: 1; display: flex; flex-direction: column; }
.blend { display: flex; gap: 6px; height: 29px; padding: 1px 0 0 13px; }
.blend label { position: relative; width: 68px; height: 20px; }
.blend select { width: 100%; height: 100%; appearance: none; border: 1px solid #262626; background: linear-gradient(#505050, #404040); color: #bbb; font-size: 9px; padding-left: 18px; }
.blend .caret { position: absolute; right: 5px; top: 9px; }
.blend input { width: 49px; height: 20px; border: 0; padding: 0 12px 5px 0; text-align: right; color: #111; font-size: 10px; background: linear-gradient(90deg, #fff0, #fff 60%), conic-gradient(#ccc 25%, #fff 0 50%, #ccc 0 75%, #fff 0) 0 0 / 8px 8px; }
.layer-tools { height: 32px; display: flex; align-items: center; border-top: 1px solid #1c1c1c; border-bottom: 1px solid #1c1c1c; padding-left: 9px; }
.layer-tools button { width: 27px; height: 28px; }
.layer-tools .sep { margin: 0 3px; }
.layer-tools svg { width: 19px; height: 19px; }
.layer-tools .expand { width: 15px; background: #606060; margin-left: auto; }
ul { margin: 0; padding: 0 0 0 13px; list-style: none; flex: 1; }
li { position: relative; height: 57px; display: flex; align-items: center; padding-left: 1px; background: #3b3b3b; border-bottom: 2px solid #1c1c1c; border-left: 1px solid #1c1c1c; font-size: 9px; color: #bbb; }
li.selected { background: #3399ff; color: #e5f2ff; }
li .tri { position: absolute; left: -9px; top: 23px; width: 5px; height: 10px; }
.flags { display: flex; flex-direction: column; gap: 9px; }
.flags svg { width: 15px; height: 15px; }
.thumb { width: 50px; height: 39px; margin: 0 2px 0 4px; }
.checks { background: conic-gradient(#c4c4c4 25%, #fff 0 50%, #c4c4c4 0 75%, #fff 0) 0 0 / 8px 8px; border: 1px solid #fff; }
.plain { background: #ffff5b; border: 1px solid #1c1c1c; }
.layers footer { height: 27px; display: flex; align-items: center; border-top: 1px solid #1c1c1c; padding: 2px 10px 0 18px; gap: 8px; }
.layers footer button { gap: 6px; }
.layers footer svg { width: 18px; height: 18px; }
.layers footer .last { margin-left: auto; }
.dock { height: 24px; padding: 3px 0 0 2px; border-top: 1px solid #1c1c1c; }
.dock button { width: 117px; height: 20px; background: #424242; justify-content: flex-start; padding-left: 3px; gap: 9px; font-size: 11px; }
.dock svg { width: 16px; height: 16px; }

.right-strip { width: 26px; padding-left: 2px; padding-top: 2px; }
.right-strip button { width: 20px; justify-content: flex-start; gap: 9px; padding-top: 4px; line-height: 20px; color: #c4c4c4; }
.right-strip svg { width: 15px; height: 15px; }
.learn { height: 143px; border-bottom: 1px solid #222; }
.effects { height: 127px; }

.status { height: 17px; display: flex; align-items: center; justify-content: space-between; padding-right: 6px; background: #191919; font-size: 11px; color: #ccc; }
.status span { padding-top: 1px; }
.status svg { width: 12px; height: 12px; }

.context { position: absolute; left: 833px; top: 639px; width: 208px; padding: 0 2px 2px; background: #272727; border: 1px solid #141414; color: #ccc; }
.context button { width: 100%; height: 27px; justify-content: flex-start; padding: 0 2px 0 31px; }
.context small { font-size: 10px; }
.context hr { margin: 4px 10px 3px 12px; border: 0; height: 1px; background: #444; }
.context .active { background: linear-gradient(#777, #5c5c5c); border-radius: 2px; color: #eee; }
.context .tri { margin-left: auto; }
</style>
